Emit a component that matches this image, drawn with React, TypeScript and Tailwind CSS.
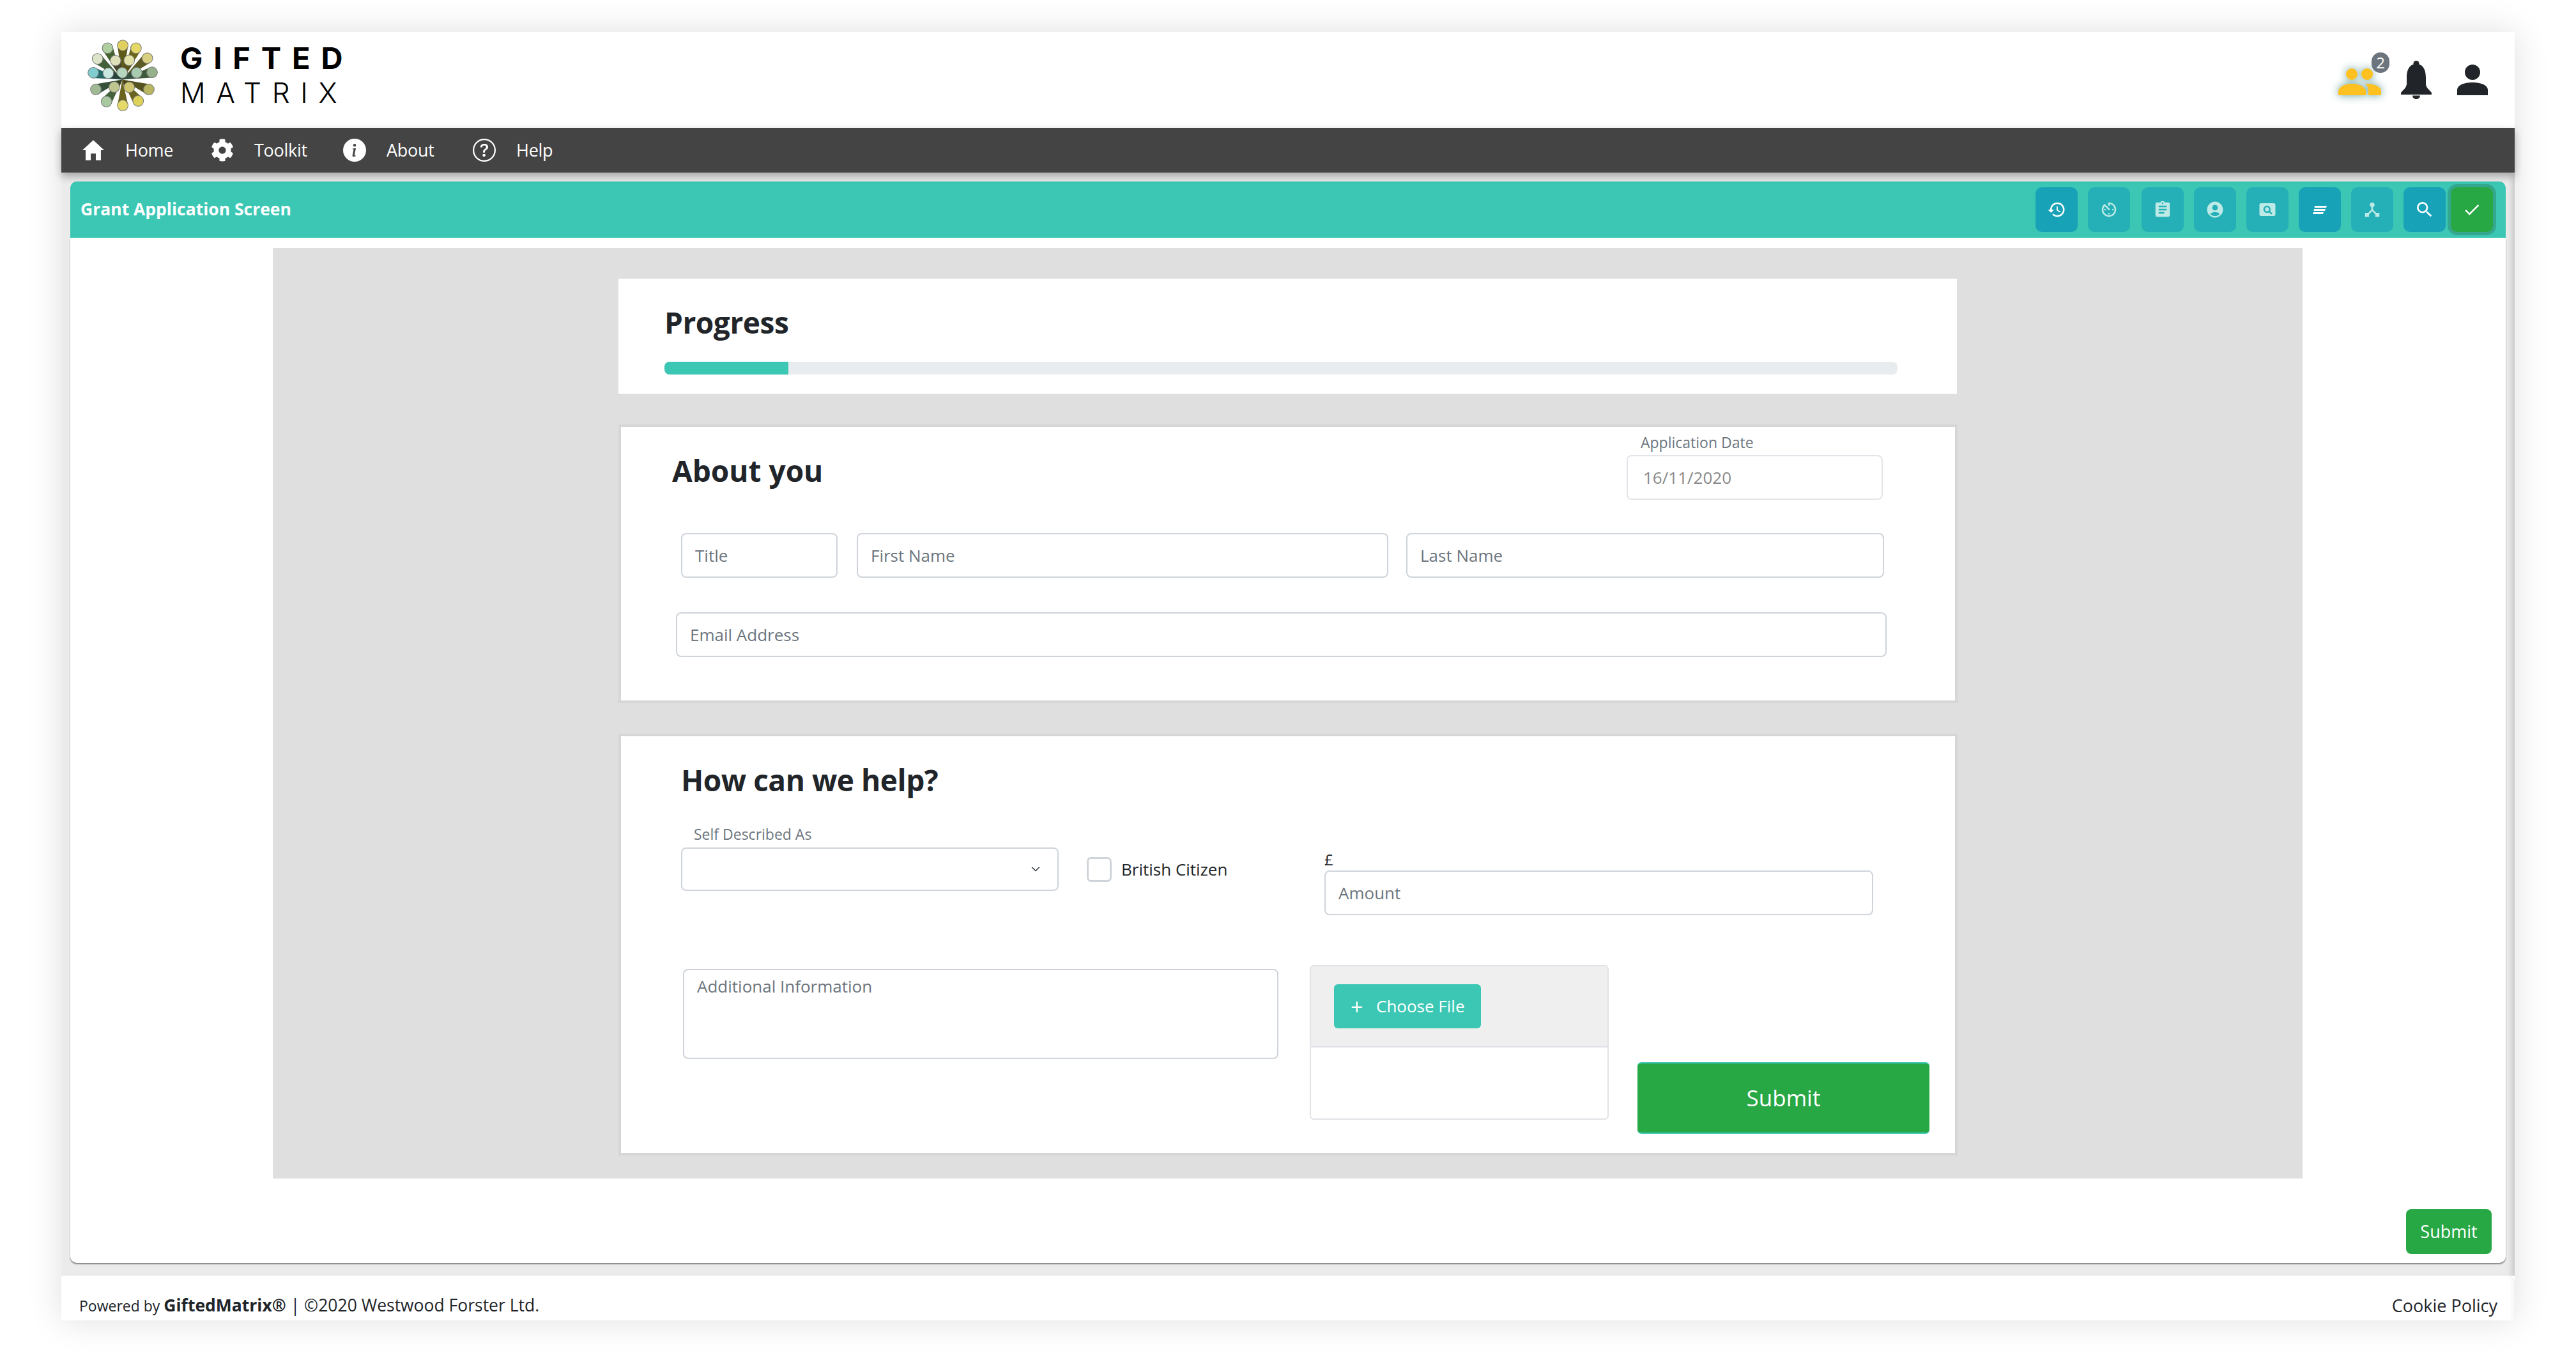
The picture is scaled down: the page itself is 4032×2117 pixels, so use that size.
import React from "react";
import { MdHistory, MdAvTimer, MdAssignment, MdAccountCircle, MdPageview, MdDeviceHub, MdSearch, MdCheck } from "react-icons/md";
import { IoMdHome } from "react-icons/io";
import { FaCog } from "react-icons/fa";
import { BsInfoCircleFill, BsQuestionCircle, BsChevronDown } from "react-icons/bs";

type Cap = [number, number, string, string];
const outer: Cap[] = [
  [218, 62, "#e0d060", "#5f5a18"], [280, 75, "#e3d868", "#6a6418"], [333, 122, "#d8cf80", "#5c5a25"],
  [355, 188, "#95b08a", "#3f5a38"], [340, 268, "#b8b660", "#55541f"], [290, 322, "#dcd25a", "#6a6420"],
  [218, 343, "#e3d868", "#6a6420"], [142, 325, "#a8c8a0", "#44633c"], [92, 268, "#9fba95", "#35503a"],
  [80, 190, "#80cdd0", "#256a68"], [100, 125, "#dde5c8", "#44603a"], [147, 75, "#b0cfa0", "#446330"],
];
const inner: Cap[] = [
  [184, 133, "#dde0b8", "#45462a"], [248, 132, "#e2e2a8", "#5a5418"], [283, 190, "#a8cbb0", "#35503e"],
  [215, 190, "#b5d5bd", "#28352a"], [150, 192, "#c8e8e0", "#27433b"], [178, 257, "#c0c690", "#353e20"], [248, 258, "#d0c870", "#484415"],
];

function Spoke({ c, r }: { c: Cap; r: number }) {
  const [x, y, top, side] = c;
  const cx = 216, cy = 222;
  const dx = cx - x, dy = cy - y;
  const l = Math.hypot(dx, dy) || 1;
  const nx = -dy / l, ny = dx / l;
  const pts = `${x + nx * r},${y + ny * r} ${x - nx * r},${y - ny * r} ${cx},${cy}`;
  return (
    <g>
      <polygon points={pts} fill={side} />
      <circle cx={x} cy={y} r={r} fill={top} stroke="#777" strokeWidth="3" />
    </g>
  );
}

function Logo() {
  return (
    <svg width="110" height="112" viewBox="53 35 329 335" className="shrink-0 mt-[12px]">
      {outer.map((c, i) => <Spoke key={i} c={c} r={25} />)}
      {inner.map((c, i) => <Spoke key={i} c={c} r={25} />)}
      <path d="M53 225H190M242 225H382" stroke="#fff" strokeWidth="5" />
    </svg>
  );
}

function Person({ className }: { className?: string }) {
  return (
    <svg viewBox="0 0 48 48" className={className} fill="currentColor">
      <circle cx="24" cy="12" r="12" />
      <path d="M0 48V40C0 32 11 28 24 28S48 32 48 40V48Z" />
    </svg>
  );
}

function Bell() {
  return (
    <svg width="48" height="60" viewBox="0 0 48 60" fill="#212529" className="mr-[40px]">
      <circle cx="24" cy="4.5" r="4.5" />
      <path d="M24 5C13 5 9 15 9 26V36C9 42 4 45 0 50V53H48V50C44 45 39 42 39 36V26C39 15 35 5 24 5Z" />
      <path d="M18 54.5H30A6 5.5 0 0 1 18 54.5Z" />
    </svg>
  );
}

function Group() {
  return (
    <svg width="67" height="42" viewBox="0 0 67 42" fill="#ffc120" className="drop-shadow-[0_0_7px_rgba(20,110,100,0.65)]">
      <circle cx="21" cy="9" r="9" />
      <circle cx="45" cy="9" r="9" />
      <path d="M0 42V36C0 29 10 24 21 24S43 29 43 36V42Z" />
      <path d="M47 42V33C47 29 45 27 42 24C54 24 67 27 67 36V42Z" />
    </svg>
  );
}

function Slant() {
  return (
    <svg width="22" height="13" viewBox="0 0 22 13" fill="#fff">
      <polygon points="3,0 22,0 21,3 2.5,3" />
      <polygon points="2,5 20,5 19,8 1.5,8" />
      <polygon points="1,10 17,10 16,13 0,13" />
    </svg>
  );
}

function ToolBtn({ dim, children }: { dim?: boolean; children: React.ReactNode }) {
  return (
    <div className={dim ? "w-[66px] h-[70px] rounded-[10px] flex items-center justify-center bg-[#24b0b6] text-[#bdeae6]" : "w-[66px] h-[70px] rounded-[10px] flex items-center justify-center bg-[#17a2b8] text-white"}>
      {children}
    </div>
  );
}

function NavItem({ icon, label, width }: { icon: React.ReactNode; label: string; width: string }) {
  return (
    <div className={`flex items-center ${width}`}>
      <div className="w-[68px] shrink-0 flex items-center">{icon}</div>
      <span className="text-[27px] tracking-[-0.01em] text-white">{label}</span>
    </div>
  );
}

const field = "h-[70px] bg-white border-2 border-[#ced4da] rounded-[8px] px-[20px] text-[26px] text-[#495057] placeholder:text-[#6c757d] outline-none";

export default function App() {
  return (
    <div className="w-[4032px] h-[2117px] overflow-hidden bg-white pt-[50px] pl-[96px] font-['Open_Sans','Noto_Sans',sans-serif] text-[#212529]">
      <div className="w-[3840px] h-[2016px] flex flex-col shadow-[0_0_50px_rgba(0,0,0,0.13)]">
        {/* Header */}
        <header className="h-[150px] shrink-0 bg-white flex items-start pl-[41px] pr-[42px]">
          <Logo />
          <div className="ml-[35px] mt-[13px] flex flex-col font-['Inter',sans-serif] text-black">
            <span className="text-[47px] leading-[56px] font-bold tracking-[0.36em]">GIFTED</span>
            <span className="text-[44px] leading-[52px] font-light tracking-[0.38em]">MATRIX</span>
          </div>
          <div className="ml-auto h-full flex items-center">
            <div className="relative mr-[31px] mt-[6px]">
              <Group />
              <span className="absolute right-[-13px] top-[-25px] w-[28px] h-[32px] rounded-[14px] bg-[#6c757d] text-white text-[24px] leading-[32px] text-center">2</span>
            </div>
            <Bell />
            <Person className="w-[48px] h-[48px] text-[#212529]" />
          </div>
        </header>

        {/* Nav */}
        <nav className="relative z-10 h-[70px] shrink-0 bg-[#444444] flex items-center pl-[32px] shadow-[0_6px_12px_rgba(0,0,0,0.3)]">
          <NavItem icon={<IoMdHome className="w-[42px] h-[42px] -ml-[3px] text-white" />} label="Home" width="w-[202px]" />
          <NavItem icon={<FaCog className="w-[36px] h-[36px] text-white" />} label="Toolkit" width="w-[207px]" />
          <NavItem icon={<BsInfoCircleFill className="w-[36px] h-[36px] text-white" />} label="About" width="w-[203px]" />
          <NavItem icon={<BsQuestionCircle className="w-[36px] h-[36px] text-white" />} label="Help" width="w-[130px]" />
        </nav>

        {/* Content */}
        <main className="flex-1 bg-[#ebebeb] px-[14px] pt-[14px] shadow-[inset_-12px_0_10px_-8px_rgba(0,0,0,0.16)]">
          <div className="h-[88px] bg-[#3bc7b4] rounded-t-[10px] flex items-center justify-between pl-[16px] pr-[20px]">
            <span className="text-[26.5px] font-bold text-white">Grant Application Screen</span>
            <div className="flex items-center gap-[16px]">
              <ToolBtn><MdHistory size={30} /></ToolBtn>
              <ToolBtn dim><MdAvTimer size={30} /></ToolBtn>
              <div className="ml-[2px]"><ToolBtn dim><MdAssignment size={30} /></ToolBtn></div>
              <ToolBtn dim><MdAccountCircle size={30} /></ToolBtn>
              <ToolBtn dim><MdPageview size={30} /></ToolBtn>
              <ToolBtn><Slant /></ToolBtn>
              <ToolBtn dim><MdDeviceHub size={30} /></ToolBtn>
              <ToolBtn><MdSearch size={32} /></ToolBtn>
              <div className="ml-[-8px] w-[66px] h-[70px] rounded-[10px] flex items-center justify-center bg-[#28a745] text-white shadow-[0_0_0_5px_#35a78f]"><MdCheck size={30} /></div>
            </div>
          </div>

          <div className="h-[1604px] bg-white rounded-b-[10px] pt-[16px] shadow-[0_2px_2px_rgba(0,0,0,0.45)]">
            <div className="ml-[317px] w-[3177px] h-[1456px] bg-[#dfdfdf] pl-[541px] pt-[48px]">
              {/* Progress */}
              <section className="w-[2095px] h-[180px] bg-white pl-[72px] pt-[38px]">
                <h2 className="text-[46px] leading-[60px] font-bold tracking-[-0.01em]">Progress</h2>
                <div className="mt-[32px] w-[1930px] h-[20px] bg-[#e9ecef] rounded-[8px] overflow-hidden">
                  <div className="w-[194px] h-full bg-[#3bc7b4]" />
                </div>
              </section>

              {/* About you */}
              <section className="mt-[48px] w-[2096px] h-[436px] bg-white border-4 border-[#d6d6d6]">
                <div className="flex justify-between h-[166px]">
                  <h2 className="ml-[80px] mt-[33px] text-[46px] leading-[70px] font-bold">About you</h2>
                  <div className="mr-[113px] pt-[8px] w-[401px]">
                    <div className="pl-[22px] text-[23px] leading-[32px] text-[#6c757d]">Application Date</div>
                    <input readOnly value="16/11/2020" className="mt-[4px] w-[401px] h-[70px] bg-white border-2 border-[#e2e5e9] rounded-[8px] px-[24px] text-[26px] text-[#888888] outline-none" />
                  </div>
                </div>
                <div className="flex ml-[94px]">
                  <input placeholder="Title" className={`${field} w-[245px]`} />
                  <input placeholder="First Name" className={`${field} w-[832px] ml-[30px]`} />
                  <input placeholder="Last Name" className={`${field} w-[748px] ml-[28px]`} />
                </div>
                <input placeholder="Email Address" className={`${field} block w-[1895px] ml-[86px] mt-[54px]`} />
              </section>

              {/* Help */}
              <section className="mt-[48px] w-[2096px] h-[660px] bg-white border-4 border-[#d6d6d6]">
                <h2 className="ml-[94px] mt-[33px] mb-[34px] text-[46px] leading-[70px] font-bold tracking-[-0.01em]">How can we help?</h2>
                <div className="flex h-[143px]">
                  <div className="ml-[94px] w-[591px]">
                    <div className="pl-[20px] text-[23px] leading-[32px] text-[#6c757d]">Self Described As</div>
                    <div className="mt-[5px] h-[68px] bg-white border-2 border-[#ced4da] rounded-[8px] flex items-center justify-end pr-[27px]">
                      <BsChevronDown className="w-[14px] h-[14px] text-[#343a40] stroke-current stroke-[1px]" />
                    </div>
                  </div>
                  <div className="ml-[44px] w-[372px] pt-[52px] flex items-start">
                    <div className="w-[39px] h-[39px] border-[3px] border-[#ced4da] rounded-[7px] bg-white" />
                    <span className="ml-[15px] text-[26px] leading-[39px]">British Citizen</span>
                  </div>
                  <div className="pt-[39px]">
                    <div className="text-[24px] leading-[34px]">£</div>
                    <input placeholder="Amount" className={`${field} w-[859px]`} />
                  </div>
                </div>
                <div className="flex mt-[78px]">
                  <textarea placeholder="Additional Information" className="ml-[97px] mt-[6px] w-[932px] h-[141px] bg-white border-2 border-[#ced4da] rounded-[8px] px-[20px] py-[6px] text-[26px] resize-none placeholder:text-[#6c757d] outline-none" />
                  <div className="ml-[49px] w-[468px] h-[242px] border-2 border-[#dfe2e6] rounded-[6px] overflow-hidden bg-white">
                    <div className="h-[127px] bg-[#efefef] border-b-2 border-[#dfe2e6] pl-[36px] pt-[28px]">
                      <div className="w-[230px] h-[69px] bg-[#3bc7b4] rounded-[6px] flex items-center pl-[26px] text-white text-[26px]">
                        <span className="w-[40px] text-[34px] leading-none">+</span>
                        <span>Choose File</span>
                      </div>
                    </div>
                  </div>
                  <div className="ml-[45px] mt-[152px] w-[457px] h-[112px] bg-[#28a745] border-y-2 border-[#3bc7b4] rounded-[6px] flex items-center justify-center text-white text-[35px]">Submit</div>
                </div>
              </section>
            </div>
            <div className="flex justify-end mt-[48px] pr-[22px]">
              <div className="w-[134px] h-[70px] bg-[#28a745] rounded-[8px] flex items-center justify-center text-white text-[27px]">Submit</div>
            </div>
          </div>
        </main>

        {/* Footer */}
        <footer className="h-[70px] shrink-0 bg-white rounded-t-[10px] flex items-end justify-between pl-[28px] pr-[27px] pb-[5px] shadow-[inset_-10px_0_10px_-10px_rgba(0,0,0,0.1)]">
          <div className="flex items-baseline text-[26.5px] leading-[36px]">
            <span className="text-[23px]">Powered by&nbsp;</span>
            <span className="font-bold text-[26.5px]">GiftedMatrix®</span>
            <span>&nbsp;| ©2020 Westwood Forster Ltd.</span>
          </div>
          <span className="text-[27px] leading-[36px]">Cookie Policy</span>
        </footer>
      </div>
    </div>
  );
}
